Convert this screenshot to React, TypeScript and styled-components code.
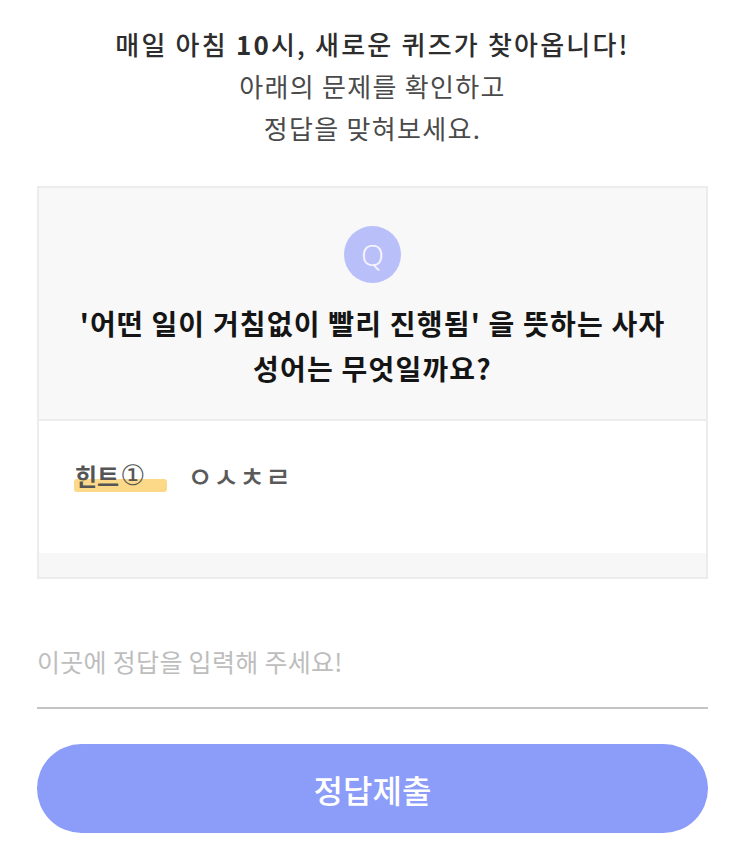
import React from "react";
import styled, { createGlobalStyle } from "styled-components";

const GlobalStyle = createGlobalStyle`
  html, body {
    margin: 0;
    padding: 0;
    background: #ffffff;
  }
  body {
    font-family: "Noto Sans CJK KR", "Noto Sans", sans-serif;
    -webkit-font-smoothing: antialiased;
  }
  * { box-sizing: border-box; }
`;

const Page = styled.main`
  display: flex;
  flex-direction: column;
  padding: 23px 35px 27px 37px;
`;

const Intro = styled.header`
  display: flex;
  flex-direction: column;
  align-items: center;
  text-align: center;
`;

const IntroLine = styled.p<{ $strong?: boolean }>`
  margin: 0;
  font-size: 26px;
  line-height: 42px;
  color: ${(p) => (p.$strong ? "#2d2d2d" : "#4a4a4a")};
  font-weight: ${(p) => (p.$strong ? 500 : 400)};
  letter-spacing: ${(p) => (p.$strong ? "2.2px" : "1.3px")};
  white-space: nowrap;
`;

const Num = styled.b`
  font-weight: 700;
`;

const Card = styled.section`
  margin-top: 37px;
  border: 2px solid #ececec;
  display: flex;
  flex-direction: column;
`;

const QuestionArea = styled.div`
  background: #f8f8f8;
  display: flex;
  flex-direction: column;
  align-items: center;
  padding: 38px 20px 28px;
  border-bottom: 2px solid #ececec;
`;

const QBadge = styled.div`
  width: 57px;
  height: 57px;
  border-radius: 50%;
  background: #b9bff9;
  color: #f4f5ff;
  display: flex;
  align-items: center;
  justify-content: center;
  font-family: "Noto Sans", "Open Sans", sans-serif;
  font-weight: 300;
  font-size: 30px;
  line-height: 1;
`;

const QuestionText = styled.h2`
  margin: 18px 0 0;
  font-size: 28px;
  line-height: 45px;
  font-weight: 700;
  color: #151515;
  text-align: center;
  letter-spacing: 1.2px;
  white-space: nowrap;
`;

const HintArea = styled.div`
  background: #ffffff;
  display: flex;
  align-items: flex-start;
  gap: 20px;
  padding: 40px 36px 0;
  height: 132px;
`;

const HintLabel = styled.span`
  position: relative;
  display: inline-flex;
  align-items: center;
  padding-right: 22px;
  font-size: 24px;
  line-height: 30px;
  height: 30px;
  font-weight: 700;
  color: #555555;
  z-index: 0;
  &::before {
    content: "";
    position: absolute;
    left: -1px;
    right: 0;
    bottom: -1px;
    height: 13px;
    border-radius: 3px;
    background: #fbd57c;
    opacity: 0.9;
    z-index: -1;
  }
`;

const Circled = styled.span`
  font-family: "DejaVu Sans", "Noto Sans CJK KR", sans-serif;
  font-weight: 400;
  font-size: 28px;
  line-height: 30px;
  margin-left: 1px;
`;

const HintValue = styled.span`
  font-size: 28px;
  line-height: 30px;
  height: 30px;
  font-weight: 500;
  color: #5a5a5a;
  letter-spacing: 0.2px;
`;

const CardFooter = styled.div`
  height: 24px;
  background: #f7f7f7;
`;

const AnswerInput = styled.input`
  margin-top: 64px;
  width: 100%;
  border: none;
  border-bottom: 2px solid #c4c4c4;
  background: transparent;
  padding: 0 0 28px 0;
  font-family: "Noto Sans CJK KR", "Noto Sans", sans-serif;
  font-size: 25px;
  line-height: 36px;
  height: 66px;
  color: #333;
  outline: none;
  letter-spacing: 0.3px;
  &::placeholder {
    color: #bdbdbd;
  }
`;

const SubmitButton = styled.button`
  margin-top: 35px;
  height: 89px;
  width: 100%;
  border: none;
  border-radius: 45px;
  background: #8b9cf9;
  color: #ffffff;
  font-family: "Noto Sans CJK KR", "Noto Sans", sans-serif;
  font-size: 32px;
  font-weight: 500;
  cursor: pointer;
`;

export default function App() {
  return (
    <>
      <GlobalStyle />
      <Page>
        <Intro>
          <IntroLine $strong>
            매일 아침 <Num>10</Num>시, 새로운 퀴즈가 찾아옵니다!
          </IntroLine>
          <IntroLine>아래의 문제를 확인하고</IntroLine>
          <IntroLine>정답을 맞혀보세요.</IntroLine>
        </Intro>
        <Card>
          <QuestionArea>
            <QBadge>Q</QBadge>
            <QuestionText>
              '어떤 일이 거침없이 빨리 진행됨' 을 뜻하는 사자
              <br />
              성어는 무엇일까요?
            </QuestionText>
          </QuestionArea>
          <HintArea>
            <HintLabel>
              힌트<Circled>①</Circled>
            </HintLabel>
            <HintValue>ㅇㅅㅊㄹ</HintValue>
          </HintArea>
          <CardFooter />
        </Card>
        <AnswerInput placeholder="이곳에 정답을 입력해 주세요!" />
        <SubmitButton>정답제출</SubmitButton>
      </Page>
    </>
  );
}
